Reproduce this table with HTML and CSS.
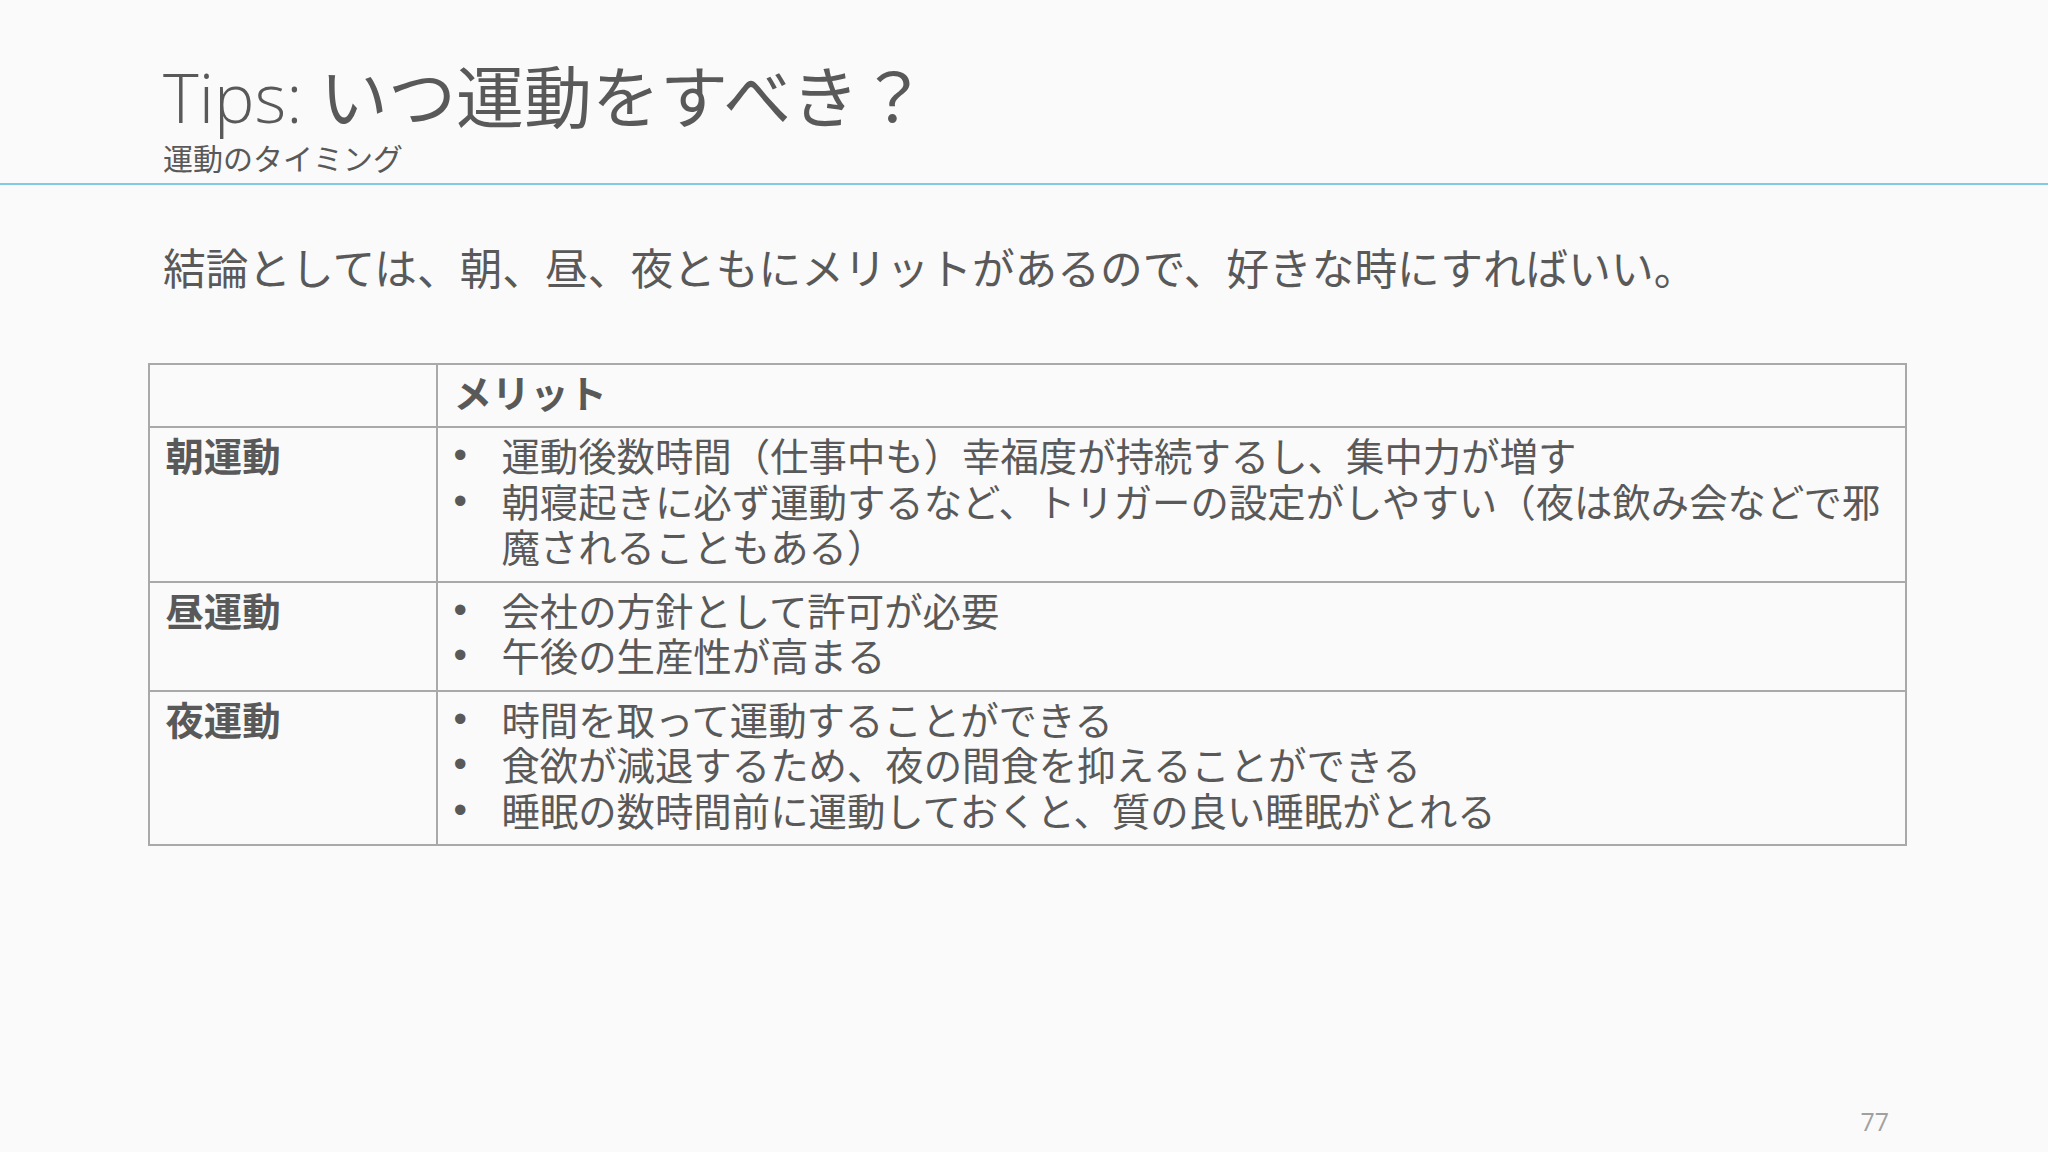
FILE: index.html
```html
<!DOCTYPE html>
<html lang="ja">
<head>
<meta charset="utf-8">
<link rel="stylesheet" href="styles.css">
</head>
<body>
<div class="slide">
  <header class="head">
    <h1 class="title"><span class="lat">Tips: </span>いつ運動をすべき？</h1>
    <div class="subtitle">運動のタイミング</div>
  </header>
  <div class="rule"></div>
  <p class="lead">結論としては、朝、昼、夜ともにメリットがあるので、好きな時にすればいい。</p>
  <table class="grid">
    <colgroup><col class="c1"><col class="c2"></colgroup>
    <tr>
      <th></th>
      <th>メリット</th>
    </tr>
    <tr>
      <th>朝運動</th>
      <td>
        <ul>
          <li><span class="dot">•</span><span class="txt">運動後数時間（仕事中も）幸福度が持続するし、集中力が増す</span></li>
          <li><span class="dot">•</span><span class="txt">朝寝起きに必ず運動するなど、トリガーの設定がしやすい（夜は飲み会などで邪魔されることもある）</span></li>
        </ul>
      </td>
    </tr>
    <tr>
      <th>昼運動</th>
      <td>
        <ul>
          <li><span class="dot">•</span><span class="txt">会社の方針として許可が必要</span></li>
          <li><span class="dot">•</span><span class="txt">午後の生産性が高まる</span></li>
        </ul>
      </td>
    </tr>
    <tr>
      <th>夜運動</th>
      <td>
        <ul>
          <li><span class="dot">•</span><span class="txt">時間を取って運動することができる</span></li>
          <li><span class="dot">•</span><span class="txt">食欲が減退するため、夜の間食を抑えることができる</span></li>
          <li><span class="dot">•</span><span class="txt">睡眠の数時間前に運動しておくと、質の良い睡眠がとれる</span></li>
        </ul>
      </td>
    </tr>
  </table>
  <footer class="foot">77</footer>
</div>
</body>
</html>
```
FILE: styles.css
```css
html, body {
  margin: 0;
  padding: 0;
  background: #fafafa;
}
.slide {
  width: 2048px;
  height: 1152px;
  overflow: hidden;
  display: flex;
  flex-direction: column;
  color: #595959;
  font-family: "Noto Sans CJK JP", sans-serif;
}
.head {
  padding: 60px 0 0 163px;
}
.title {
  margin: 0;
  font-size: 68px;
  line-height: 1;
  font-weight: 400;
  font-family: "Noto Sans CJK JP", sans-serif;
  white-space: nowrap;
}
.title .lat {
  font-family: "Open Sans", sans-serif;
  font-weight: 300;
}
.subtitle {
  margin-top: 11px;
  font-size: 30px;
  line-height: 1;
}
.rule {
  margin-top: 11px;
  height: 2px;
  background: #7fcbe6;
}
.lead {
  margin: 60px 0 0 163px;
  font-size: 42.7px;
  line-height: 1;
  white-space: nowrap;
}
.grid {
  margin: 75px 0 0 148px;
  width: 1759px;
  border-collapse: collapse;
  table-layout: fixed;
  font-size: 38.4px;
  line-height: 45.5px;
}
.c1 { width: 288px; }
.grid th, .grid td {
  border: 2px solid #a9a9a9;
  padding: 4px 15.4px 12px;
  vertical-align: top;
  text-align: left;
}
.grid th {
  font-weight: 700;
}
.grid ul {
  margin: 0;
  padding: 0;
  list-style: none;
}
.grid li {
  display: flex;
}
.dot {
  flex: 0 0 48px;
  padding-left: 0;
  box-sizing: border-box;
  font-family: "Liberation Sans", sans-serif;
}
.txt {
  flex: 1;
}
.foot {
  margin-top: auto;
  padding: 0 159px 14px 0;
  text-align: right;
  font-family: "Open Sans", sans-serif;
  font-size: 25px;
  color: #a0a0a0;
}
```
